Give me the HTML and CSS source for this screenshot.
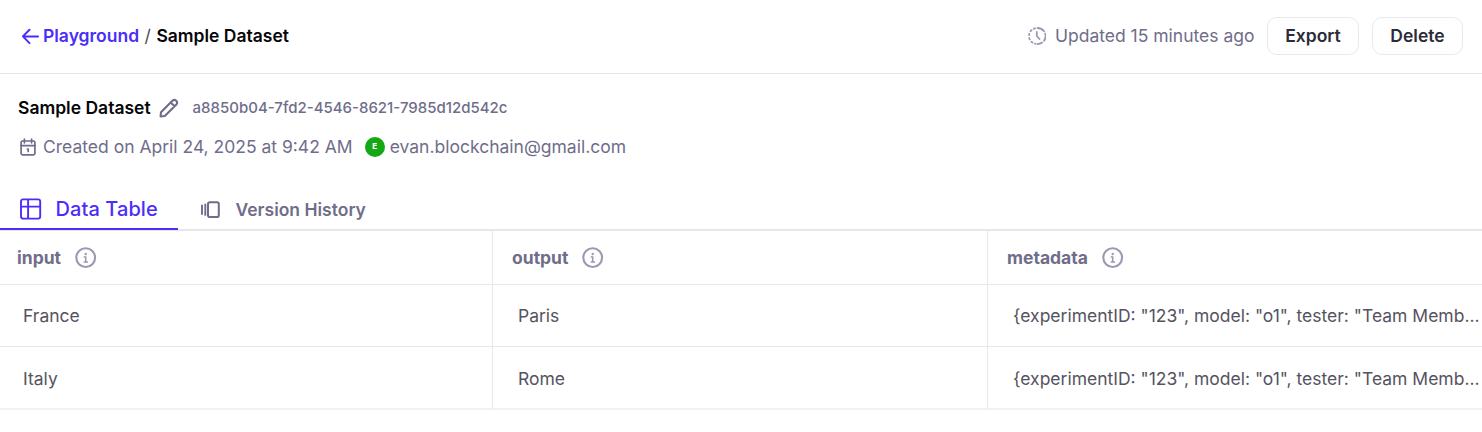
FILE: index.html
```html
<!DOCTYPE html>
<html lang="en">
<head>
<meta charset="utf-8">
<title>Sample Dataset</title>
<link rel="stylesheet" href="styles.css">
</head>
<body>
<svg class="sprite" aria-hidden="true">
  <symbol id="info" viewBox="0 0 22 22">
    <circle cx="10.7" cy="10.6" r="9.4" fill="none" stroke="currentColor" stroke-width="2.1"/>
    <path d="M8.7 9.9h2v5M8.6 14.9H13" fill="none" stroke="currentColor" stroke-width="1.5"/>
    <circle cx="10.7" cy="7" r="1.2" fill="currentColor"/>
  </symbol>
</svg>
<header class="topbar">
  <nav class="crumbs">
    <a class="back">
      <svg class="back-icon" width="18" height="16" viewBox="0 0 18 16" fill="none" stroke="currentColor" stroke-width="2" stroke-linecap="round" stroke-linejoin="round"><path d="M16 8.4H1.1M7.5 1.7L.9 8.4l6.6 6.7"/></svg>
      <span>Playground</span>
    </a>
    <span class="slash">/</span>
    <span class="current">Sample Dataset</span>
  </nav>
  <div class="actions">
    <svg class="clock" width="18" height="18" viewBox="0 0 18 18" fill="none" stroke="currentColor" stroke-width="1.8" stroke-linecap="round" stroke-linejoin="round"><path d="M9.6 1A8 8 0 0 1 9.6 17" stroke-dasharray="7.5 2.6"/><path d="M6.9 1.3l-1 .4M3.6 3.1l-1 1.1M1.3 6.8L1 8.2M1.2 11l.5 1.4M3.4 14.7l1.1.9M6.9 16.7l.6.1"/><path d="M8.8 5v4l2.7 3"/></svg>
    <span class="updated">Updated 15 minutes ago</span>
    <button class="btn export">Export</button>
    <button class="btn delete">Delete</button>
  </div>
</header>
<section class="details">
  <div class="title-row">
    <h1 class="title">Sample Dataset</h1>
    <svg class="pencil" width="20" height="20" viewBox="0 0 20 20" fill="none" stroke="currentColor" stroke-width="2.1" stroke-linejoin="round"><path d="M1.6 18.4l.4-4.2L13.6 2.6a2.7 2.7 0 0 1 3.8 3.8L5.8 18zM11.7 4.5l3.8 3.8"/></svg>
    <span class="uuid">a8850b04-7fd2-4546-8621-7985d12d542c</span>
  </div>
  <div class="meta-row">
    <svg class="calendar" width="16" height="18" viewBox="0 0 16 18" fill="none" stroke="currentColor" stroke-width="1.7" stroke-linecap="round" stroke-linejoin="round"><rect x="1.1" y="3" width="13.8" height="13.8" rx="1.5"/><path d="M1 7.6h14M4.4 1v3.8M11.6 1v3.8M7.4 11h.8v2.5"/></svg>
    <span class="created">Created on April 24, 2025 at 9:42 AM</span>
    <span class="avatar">E</span>
    <span class="email">evan.blockchain@gmail.com</span>
  </div>
</section>
<nav class="tabs">
  <a class="tab active">
    <svg width="22" height="22" viewBox="0 0 22 22" fill="none" stroke="currentColor" stroke-width="1.9"><rect x="1" y="1.4" width="19.2" height="19.2" rx="2"/><path d="M1 8.6h19.2M8.1 1.4v19.2"/></svg>
    <span class="tab-label">Data Table</span>
  </a>
  <a class="tab">
    <svg width="20" height="18" viewBox="0 0 20 18" fill="none" stroke="currentColor" stroke-width="2"><rect x="8" y="1.3" width="10.8" height="14.8" rx="1.8"/><path d="M5.3 2.7v12" stroke-width="1.9"/><path d="M2 3.7v10" stroke-width="1.9"/></svg>
    <span class="tab-label">Version History</span>
  </a>
</nav>
<main class="grid">
  <div class="cell head"><span class="name">input</span><svg class="info"><use href="#info"/></svg></div>
  <div class="cell head"><span class="name">output</span><svg class="info"><use href="#info"/></svg></div>
  <div class="cell head"><span class="name">metadata</span><svg class="info"><use href="#info"/></svg></div>
  <div class="cell"><span class="value">France</span></div>
  <div class="cell"><span class="value">Paris</span></div>
  <div class="cell"><span class="value">{experimentID: "123", model: "o1", tester: "Team Memb...</span></div>
  <div class="cell last"><span class="value">Italy</span></div>
  <div class="cell last"><span class="value">Rome</span></div>
  <div class="cell last"><span class="value">{experimentID: "123", model: "o1", tester: "Team Memb...</span></div>
</main>
</body>
</html>
```
FILE: styles.css
```css
* { box-sizing: border-box; }
body {
  margin: 0;
  background: #fff;
  color: #706d8a;
  font: 400 17.5px/24px Inter, "Liberation Sans", sans-serif;
  white-space: nowrap;
  overflow: hidden;
}
svg { display: block; flex: none; }
.sprite { position: absolute; width: 0; height: 0; }

.topbar {
  display: flex;
  justify-content: space-between;
  align-items: center;
  height: 74px;
  padding: 0 19px 2px 22px;
  border-bottom: 1px solid #e6e6eb;
}
.crumbs, .back, .actions, .title-row, .meta-row, .tab, .cell { display: flex; align-items: center; }
.crumbs { font-weight: 600; }
.back { color: #4b2dfa; gap: 3px; }
.slash { margin: 0 5.5px; color: #4d4b59; font-weight: 400; }
.current, .title { color: #050508; }
.clock { margin-right: 9px; color: #9b98b2; }
.updated { margin-right: 12.5px; }
.btn {
  height: 38px;
  padding: 0;
  border: 1px solid #e9e9ec;
  border-radius: 10px;
  background: #fff;
  color: #2c2b38;
  font: 600 17.5px/24px Inter, "Liberation Sans", sans-serif;
}
.export { width: 92px; margin-right: 13px; }
.delete { width: 91px; }

.details { height: 115px; padding: 22px 18px 0; }
.title-row { height: 24px; }
.title { margin: 0; font-size: 17.5px; font-weight: 600; }
.pencil { margin: 0 14px 0 8px; }
.uuid { font-size: 15px; font-weight: 500; }
.meta-row { height: 24px; margin-top: 15px; }
.calendar { margin: 0 7px 0 2px; }
.avatar {
  width: 20px;
  height: 20px;
  margin: 0 5px 0 12px;
  border-radius: 50%;
  background: #15a815;
  color: #fff;
  font-size: 8px;
  font-weight: 800;
  line-height: 19px;
  text-align: center;
}

.tabs { display: flex; height: 42px; box-shadow: inset 0 -2px #e6e6eb; }
.tab { height: 42px; padding-left: 22px; gap: 15.5px; font-weight: 600; }
.tab.active {
  width: 178px;
  height: 41px;
  padding-left: 20px;
  gap: 13.5px;
  border-bottom: 2px solid #4b2dfa;
  color: #4b2dfa;
  font-size: 20px;
  font-weight: 500;
  letter-spacing: 0.08px;
}

.grid {
  display: grid;
  grid-template-columns: 493px 495px 494px;
  grid-template-rows: 54px 62px 63px;
}
.cell {
  min-width: 0;
  padding-left: 25px;
  border-right: 1px solid #e6e6eb;
  border-bottom: 1px solid #e6e6eb;
  color: #55535f;
}
.cell:nth-child(3n+1) { padding-left: 23px; }
.cell:nth-child(3n) { padding-left: 25px; border-right: 0; }
.cell.head { padding-left: 19px; gap: 14px; color: #706d8a; font-weight: 700; }
.cell.head:nth-child(3n+1) { padding-left: 17px; }
.cell.last { padding-top: 2px; border-bottom: 2px solid #f2f2f4; }
.info { width: 22px; height: 22px; color: #9b98b2; }
```
